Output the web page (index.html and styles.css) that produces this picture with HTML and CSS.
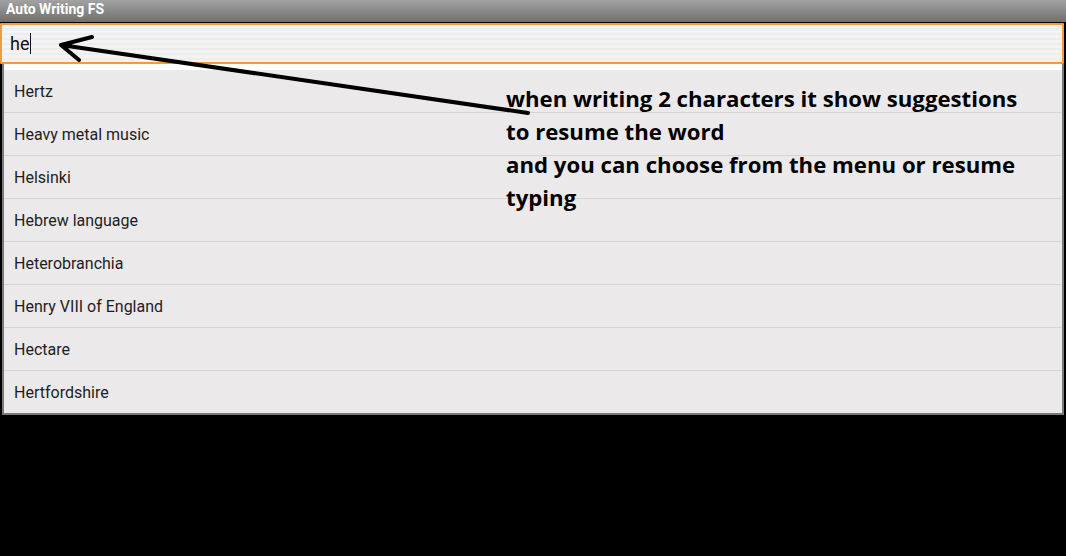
FILE: index.html
```html
<!DOCTYPE html>
<html lang="en">
    <head>
        <meta charset="UTF-8" />
        <meta name="viewport" content="width=device-width, initial-scale=1.0" />
        <title>Auto Writing FS</title>
        <link rel="stylesheet" href="styles.css">
    </head>
    <body>
        <div class="titlebar">Auto Writing FS</div>

        <div class="search">
            <span class="typed">he</span><span class="caret"></span>
        </div>

        <div class="suggestions">
            <div class="item">Hertz</div>
            <div class="item">Heavy metal music</div>
            <div class="item">Helsinki</div>
            <div class="item">Hebrew language</div>
            <div class="item">Heterobranchia</div>
            <div class="item">Henry VIII of England</div>
            <div class="item">Hectare</div>
            <div class="item">Hertfordshire</div>
        </div>

        <!-- hand drawn note over the screen -->
        <svg class="arrow" width="1066" height="556" viewBox="0 0 1066 556">
            <path d="M528 113 L61 45 M61 45 L92 37 M61 45 L79 60"
                  fill="none" stroke="#000" stroke-width="4" stroke-linecap="round" stroke-linejoin="round" />
        </svg>
        <div class="note">
            when writing 2 characters it show suggestions<br>
            to resume the word<br>
            and you can choose from the menu or resume<br>
            typing
        </div>
    </body>
</html>
```

FILE: styles.css
```css
body {
    margin: 0;
    width: 1066px;
    height: 556px;
    background: #000;
    font-family: Roboto, "Noto Sans", sans-serif;
    overflow: hidden;
    position: relative;
}

.titlebar {
    height: 22px;
    background: linear-gradient(#a3a3a3, #6f6f6f);
    color: #fff;
    font-size: 14px;
    font-weight: bold;
    line-height: 19px;
    padding-left: 6px;
}

.search {
    height: 37px;
    margin: 1px 2px 0 0;
    border: 2px solid #f39a3a;
    border-radius: 1px;
    background: repeating-linear-gradient(#f4f3f3 0, #f4f3f3 3px, #eeeded 3px, #eeeded 5px);
    display: flex;
    align-items: center;
    padding-left: 8px;
    font-size: 18px;
    color: #111;
}

.caret {
    width: 1px;
    height: 21px;
    background: #111;
    margin-left: 1px;
}

.suggestions {
    margin: 0 2px 0 2px;
    padding-top: 6px;
    background: #fff;
    border: 2px solid #7a7a7a;
    border-top: none;
}

.item {
    height: 42px;
    border-bottom: 1px solid #d6d4d5;
    background: #ebe9ea;
    display: flex;
    align-items: center;
    padding-left: 10px;
    font-size: 16px;
    color: #1e1e1e;
}

.item:last-child {
    border-bottom: none;
}

.arrow {
    position: absolute;
    top: 0;
    left: 0;
    pointer-events: none;
}

.note {
    position: absolute;
    left: 506px;
    top: 82px;
    font-family: "Open Sans", Lato, sans-serif;
    font-weight: bold;
    font-size: 22.2px;
    line-height: 33px;
    color: #000;
}
```
